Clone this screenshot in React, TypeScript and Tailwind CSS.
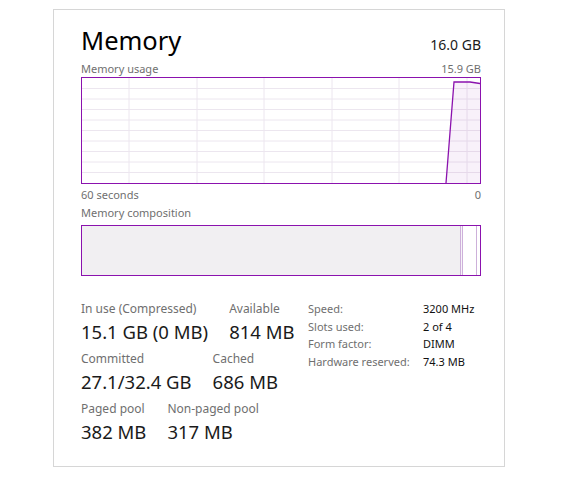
import React from "react";

const purple = "#8b12ae";

const UsageChart = () => {
  const vLines = [47, 115, 182, 250, 317, 385];
  const hLines = [1, 2, 3, 4, 5, 6, 7, 8, 9].map((i) => i * 10.5);
  return (
    <div className="w-[400px] h-[107px] border border-[#8b12ae]">
      <svg width="398" height="105" viewBox="0 0 398 105" className="block">
        {hLines.map((y) => (
          <line key={y} x1="0" x2="398" y1={y} y2={y} stroke="#ece6ef" strokeWidth="1" />
        ))}
        {vLines.map((x) => (
          <line key={x} x1={x} x2={x} y1="0" y2="105" stroke="#ece6ef" strokeWidth="1" />
        ))}
        <path d="M364 105 L372 4 L388 4 L398 5.5 L398 105 Z" fill="#8b12ae" fillOpacity="0.06" />
        <polyline points="364,105 372,4 388,4 398,5.5" fill="none" stroke={purple} strokeWidth="1.3" />
      </svg>
    </div>
  );
};

const Composition = () => (
  <div className="w-[400px] h-[51px] border border-[#8b12ae] flex">
    <div className="w-[378px] bg-[#f1eff2]" />
    <div className="w-px bg-[#cdb0da]" />
    <div className="w-px bg-[#f7f3f8]" />
    <div className="w-px bg-[#cdb0da]" />
    <div className="w-[13px] bg-white" />
    <div className="w-px bg-[#cdb0da]" />
    <div className="flex-1 bg-white" />
  </div>
);

const Stat = ({ label, value }: { label: string; value: string }) => (
  <div className="flex flex-col">
    <span className="text-[12px] leading-[16px] text-[#6f6f6f] whitespace-nowrap">{label}</span>
    <span className="text-[18.5px] leading-[26px] mt-[2px] text-[#1a1a1a] whitespace-nowrap">{value}</span>
  </div>
);

const specs = [
  ["Speed:", "3200 MHz"],
  ["Slots used:", "2 of 4"],
  ["Form factor:", "DIMM"],
  ["Hardware reserved:", "74.3 MB"],
];

export default function App() {
  return (
    <div
      className="w-[565px] h-[482px] bg-white pt-[9px] pl-[53px]"
      style={{ fontFamily: '"Noto Sans", "Open Sans", sans-serif' }}
    >
      <div className="w-[452px] h-[458px] border border-[#d6d6d6] pl-[27px] pt-[14px]">
        <div className="w-[400px] flex justify-between items-end h-[32px]">
          <span className="text-[25.5px] leading-[32px] text-black">Memory</span>
          <span className="text-[14px] leading-[20px] text-[#1a1a1a] mb-[1px]">16.0 GB</span>
        </div>
        <div className="w-[400px] flex justify-between text-[11px] leading-[15px] text-[#6f6f6f] mt-[5px] mb-[1px]">
          <span>Memory usage</span>
          <span>15.9 GB</span>
        </div>
        <UsageChart />
        <div className="w-[400px] flex justify-between text-[11px] leading-[15px] text-[#6f6f6f] mt-[3px]">
          <span>60 seconds</span>
          <span>0</span>
        </div>
        <div className="text-[11px] leading-[15px] text-[#6f6f6f] mt-[3px] mb-[5px]">Memory composition</div>
        <Composition />
        <div className="flex mt-[25px]">
          <div className="flex flex-col gap-[6px] w-[227px]">
            <div className="flex gap-[21px]">
              <Stat label="In use (Compressed)" value="15.1 GB (0 MB)" />
              <Stat label="Available" value="814 MB" />
            </div>
            <div className="flex gap-[21px]">
              <Stat label="Committed" value="27.1/32.4 GB" />
              <Stat label="Cached" value="686 MB" />
            </div>
            <div className="flex gap-[21px]">
              <Stat label="Paged pool" value="382 MB" />
              <Stat label="Non-paged pool" value="317 MB" />
            </div>
          </div>
          <div className="flex flex-col text-[11px] leading-[17.5px] -mt-[1px]">
            {specs.map(([k, v]) => (
              <div key={k} className="flex">
                <span className="w-[115px] text-[#6f6f6f]">{k}</span>
                <span className="text-[#111]">{v}</span>
              </div>
            ))}
          </div>
        </div>
      </div>
    </div>
  );
}
